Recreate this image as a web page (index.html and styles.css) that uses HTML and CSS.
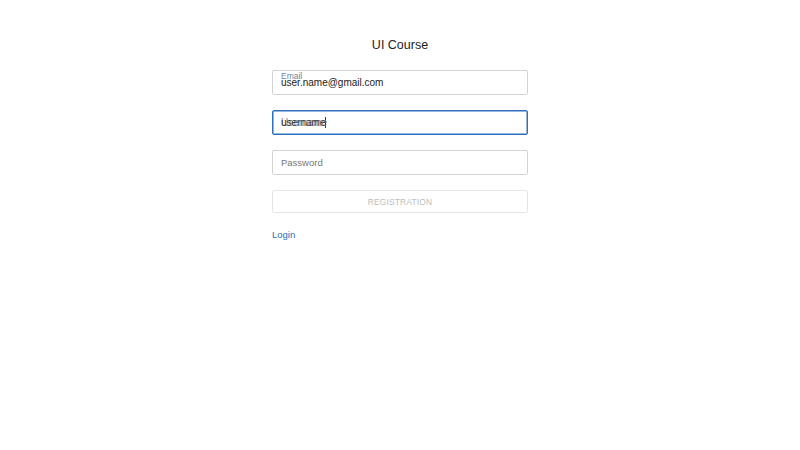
FILE: index.html
```html
<!DOCTYPE html>
<html>
<head>
<meta charset="utf-8">
<link rel="stylesheet" href="styles.css">
</head>
<body>
<main class="form">
  <h1 class="title">UI Course</h1>
  <div class="field filled">
    <span class="label">Email</span>
    <span class="value">user.name@gmail.com</span>
  </div>
  <div class="field focused">
    <span class="ghost">Username</span>
    <span class="value">username</span><span class="caret"></span>
  </div>
  <div class="field">
    <span class="placeholder">Password</span>
  </div>
  <div class="button">REGISTRATION</div>
  <a class="link" href="#">Login</a>
</main>
</body>
</html>
```
FILE: styles.css
```css
* { box-sizing: border-box; }
html, body { margin: 0; padding: 0; background: #ffffff; }
body { font-family: "Liberation Sans", Arial, sans-serif; color: #222; }
.form {
  width: 256px;
  margin: 0 auto;
  padding-top: 38px;
  display: flex;
  flex-direction: column;
}
.title {
  margin: 0 0 17px;
  font-size: 12.5px;
  line-height: 15px;
  font-weight: normal;
  text-align: center;
  color: #222;
}
.field {
  position: relative;
  height: 25px;
  border: 1px solid #d3d3d3;
  border-radius: 2px;
  margin-bottom: 15px;
  padding: 0 8px;
  display: flex;
  align-items: center;
}
.field .value { font-size: 10px; line-height: 12px; color: #222; }
.field .placeholder { font-size: 9.5px; color: #777; }
.filled .label {
  position: absolute;
  left: 8px;
  top: 1px;
  font-size: 8.5px;
  line-height: 9px;
  color: #6f86a0;
}
.focused { border-color: #2f6fbf; box-shadow: inset 0 0 0 0.5px #2f6fbf; }
.focused .ghost {
  position: absolute;
  left: 8px;
  top: 6px;
  font-size: 10px;
  line-height: 12px;
  color: #888;
}
.focused .value { position: relative; color: #333; }
.caret { display: inline-block; width: 1px; height: 11px; background: #333; }
.button {
  height: 23px;
  border: 1px solid #e6e6e6;
  border-radius: 2px;
  display: flex;
  align-items: center;
  justify-content: center;
  font-size: 8.4px;
  letter-spacing: 0.2px;
  color: #bdbdbd;
  margin-bottom: 16px;
}
.link {
  align-self: flex-start;
  font-size: 9.5px;
  line-height: 12px;
  color: #1f6fbf;
  text-decoration: none;
}
```
